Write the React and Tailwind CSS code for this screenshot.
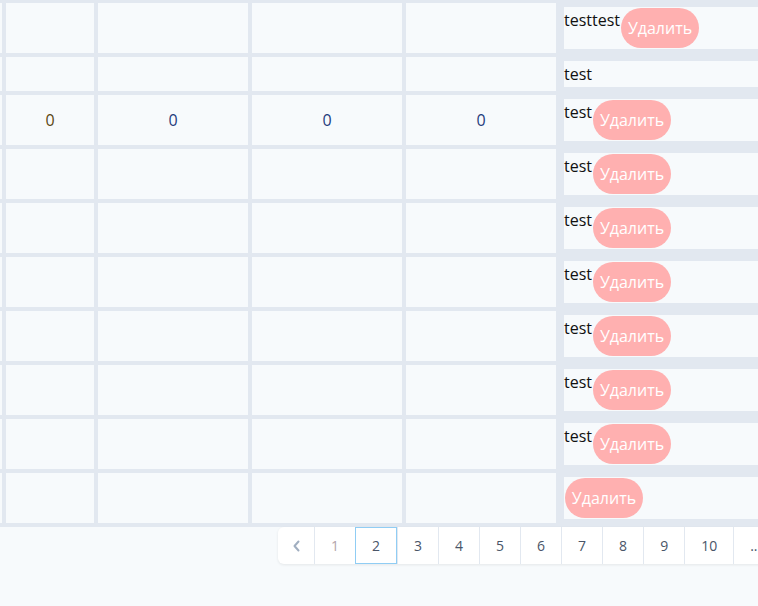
import React from 'react';

const rows = [
  { text: 'testtest', button: true },
  { text: 'test', button: false },
  { text: 'test', button: true, zeros: true },
  { text: 'test', button: true },
  { text: 'test', button: true },
  { text: 'test', button: true },
  { text: 'test', button: true },
  { text: 'test', button: true },
  { text: 'test', button: true },
  { text: '', button: true },
];

const pages = ['1', '2', '3', '4', '5', '6', '7', '8', '9', '10', '...'];

const Pagination = () => (
  <div className="ml-[278px] flex h-[37px] w-max rounded-l-md bg-white text-sm text-[#4a5568] shadow-[0_1px_3px_rgba(0,0,0,0.08)]">
    <button className="flex w-9 shrink-0 items-center justify-center text-[#a0aec0]">
      <svg width="9" height="12" viewBox="0 0 9 12" fill="none">
        <path d="M6.5 1.5 2.5 6l4 4.5" stroke="currentColor" strokeWidth="2" strokeLinecap="round" strokeLinejoin="round" />
      </svg>
    </button>
    {pages.map((p) => (
      <button
        key={p}
        className={`flex shrink-0 items-center justify-center px-4 ${
          p === '2'
            ? 'border border-[#90cdf4]'
            : 'border-l border-[#e2e8f0]'
        } ${p === '1' ? 'text-[#b4a4aa]' : ''}`}
      >
        {p}
      </button>
    ))}
  </div>
);

export default function App() {
  return (
    <div className="min-h-screen overflow-hidden bg-[#f7fafc] font-['Open_Sans',sans-serif] text-base">
      <table className="-mt-px -ml-[42px] w-[1100px] table-fixed border-separate border-spacing-1 bg-[#e2e8f0]">
        <colgroup>
          <col className="w-10" />
          <col className="w-[88px]" />
          <col className="w-[150px]" />
          <col className="w-[150px]" />
          <col className="w-[150px]" />
          <col />
        </colgroup>
        <tbody>
          {rows.map((row, i) => (
            <tr key={i}>
              <td className="bg-[#f7fafc]" />
              <td className="bg-[#f7fafc] text-center text-[#5a4712]">{row.zeros ? '0' : ''}</td>
              <td className="bg-[#f7fafc] text-center text-[#1f3c7c]">{row.zeros ? '0' : ''}</td>
              <td className="bg-[#f7fafc] text-center text-[#1f3c7c]">{row.zeros ? '0' : ''}</td>
              <td className="bg-[#f7fafc] text-center text-[#1f3c7c]">{row.zeros ? '0' : ''}</td>
              <td className="p-1 align-top">
                <div className="flex items-start bg-[#f7fafc] text-[#111]">
                  {row.text && <span className="leading-[26px]">{row.text}</span>}
                  {row.button && (
                    <button className="m-px h-10 w-[78px] rounded-full bg-[#ffb0b0] text-white">
                      Удалить
                    </button>
                  )}
                </div>
              </td>
            </tr>
          ))}
        </tbody>
      </table>
      <Pagination />
    </div>
  );
}
